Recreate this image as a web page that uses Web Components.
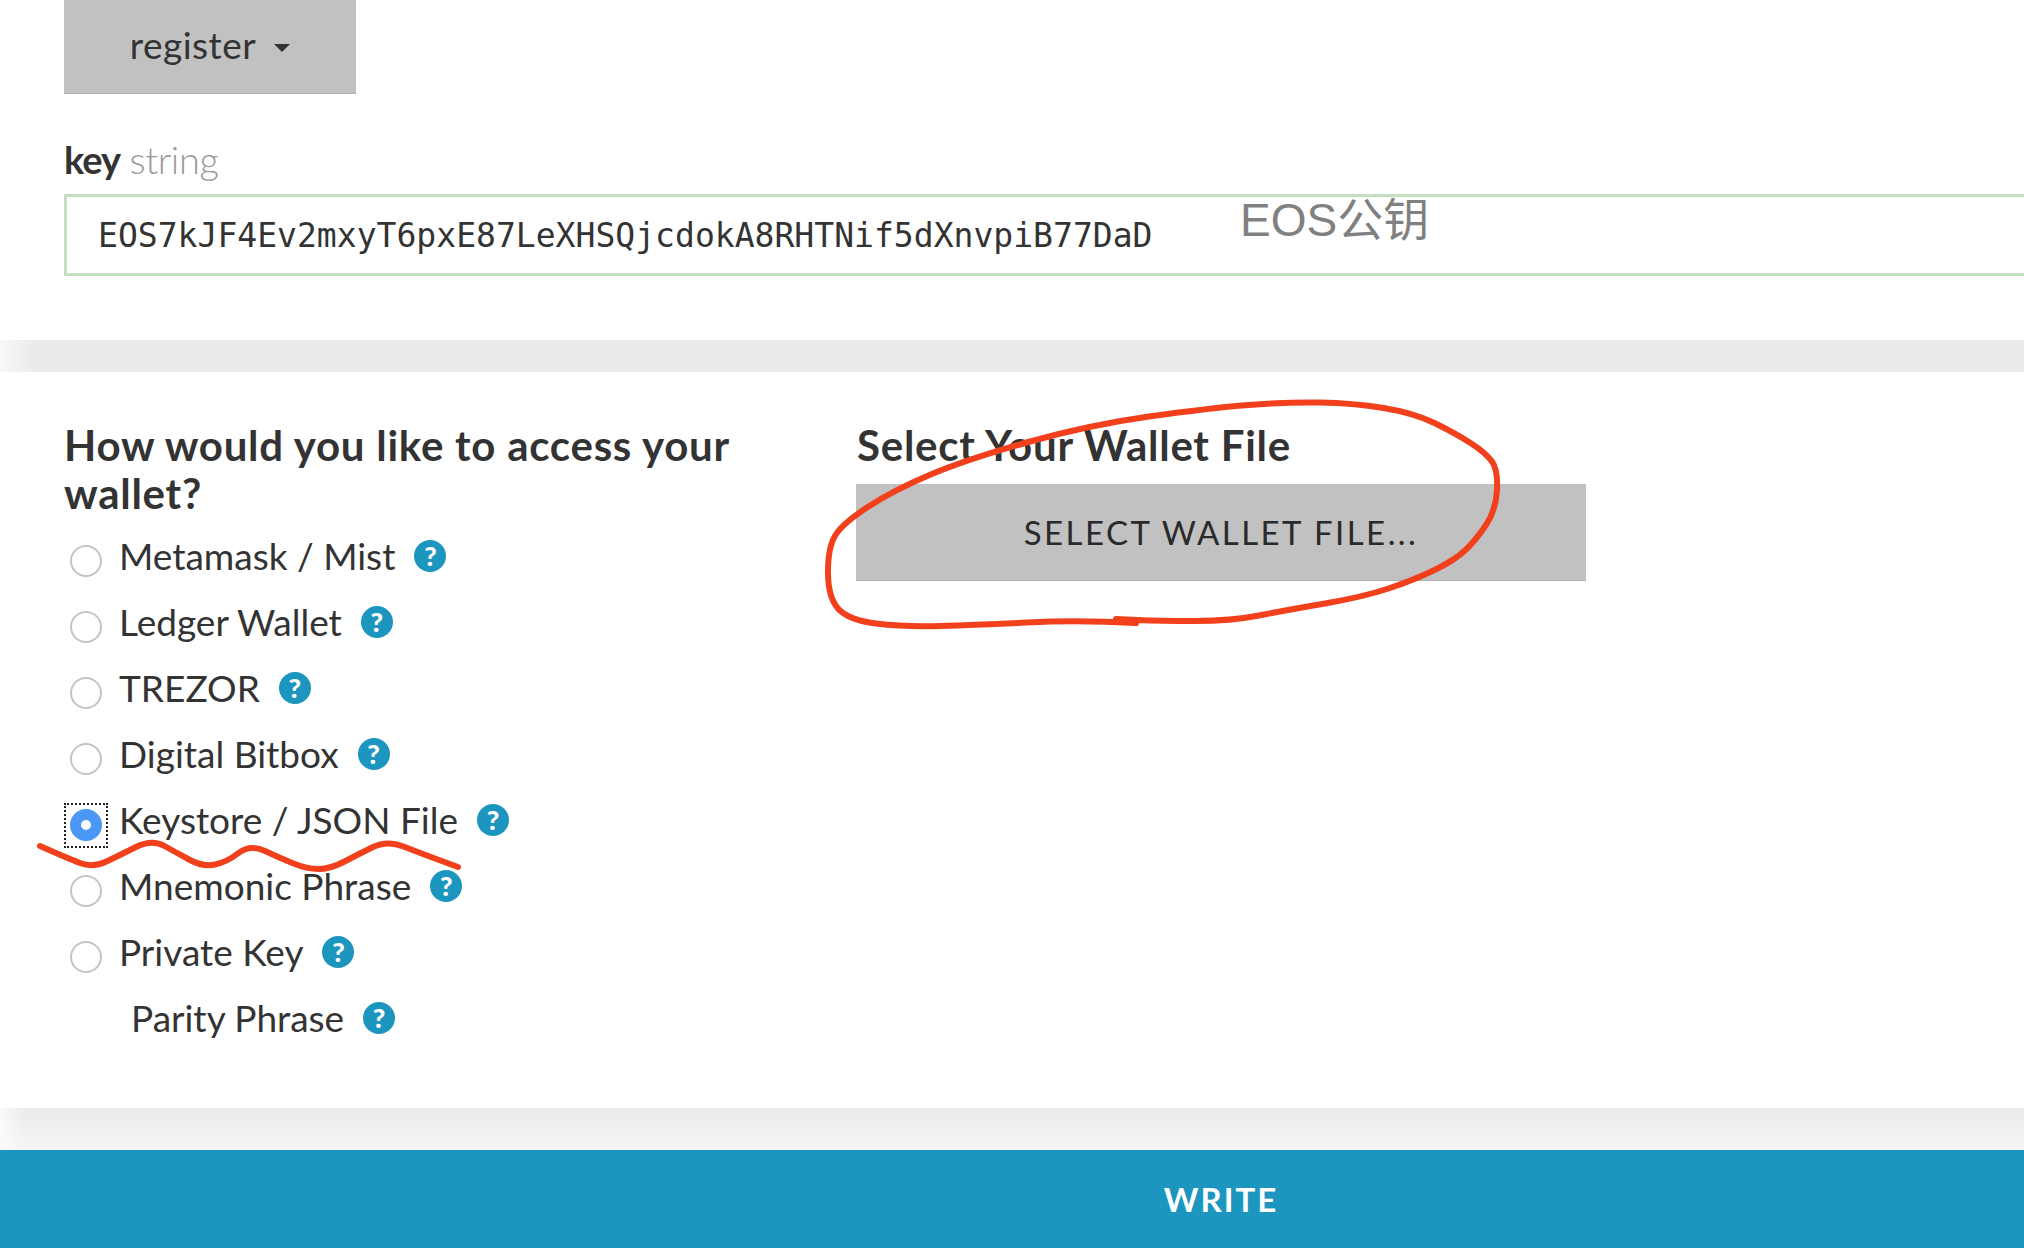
<!DOCTYPE html>
<html lang="en">
<head>
<meta charset="utf-8">
<title>write contract</title>
<style>
    html, body { margin: 0; padding: 0; background: #fff; overflow: hidden; height: 1252px; }
    body { font-family: Lato, "Liberation Sans", sans-serif; color: #333; }
</style>
</head>
<body>
<contract-page>
    <register-form slot="form"></register-form>
    <wallet-panel slot="wallet"></wallet-panel>
</contract-page>

<script>
const pageTemplate = document.createElement('template');
pageTemplate.innerHTML = `
    <style>
        :host { display: block; position: relative; height: 1252px; overflow: hidden; }
        .band { height: 32px; background: linear-gradient(to right, #f8f8f8, #ebebeb 34px); }
        .band.low { height: 42px; background: linear-gradient(to right, #fafafa, transparent 24px), linear-gradient(to bottom, #ebebeb, #f4f5f4); }
        .write { height: 98px; box-sizing: border-box; padding-left: 418px; display: flex; align-items: center; justify-content: center; background: #1c96bf; color: #fff; font-size: 33px; font-weight: 700; letter-spacing: 2px; }
    </style>
    <slot name="form"></slot>
    <div class="band"></div>
    <slot name="wallet"></slot>
    <div class="band low"></div>
    <div class="write">WRITE</div>
    <scribble-mark closed points="1136,623 1078,620 976,625 904,627 848,620 828,597 828,547 843,523 894,490 965,460 1088,425 1210,408 1287,402 1353,403 1414,413 1455,433 1486,453 1498,470 1496,510 1476,540 1455,560 1414,580 1363,597 1287,610 1231,621 1159,621 1116,619"></scribble-mark>
    <scribble-mark points="40,846 67,858 93,868 120,855 152,839 177,853 203,867 227,862 250,844 280,858 307,869 330,869 357,855 387,840 420,853 458,867"></scribble-mark>
`;

class ContractPage extends HTMLElement {
    constructor() {
        super();
        this.attachShadow({ mode: 'open' });
        this.shadowRoot.appendChild(pageTemplate.content.cloneNode(true));
    }
}

const formTemplate = document.createElement('template');
formTemplate.innerHTML = `
    <style>
        :host { display: block; position: relative; height: 340px; padding-left: 64px; box-sizing: border-box; }
        .dropdown { width: 292px; height: 94px; box-sizing: border-box; display: flex; align-items: center; justify-content: center; gap: 18px; padding-bottom: 4px; background: #c1c1c1; border-bottom: 1px solid #b0b0b0; font-size: 37px; letter-spacing: 0.5px; }
        .caret { width: 0; height: 0; margin-top: 6px; border: 8px solid transparent; border-top: 8px solid #333; border-bottom: 0; }
        label { display: block; margin-top: 42px; height: 58px; line-height: 46px; font-size: 38px; letter-spacing: -0.4px; }
        b { font-weight: 700; letter-spacing: -1px; }
        span.type { color: #999; font-weight: 300; }
        .input { height: 82px; box-sizing: border-box; border: 3px solid #c3dfc0; border-right: 0; display: flex; align-items: center; padding: 0 0 0 31px; font-family: "DejaVu Sans Mono", "Liberation Mono", monospace; font-size: 33.05px; color: #333; white-space: nowrap; overflow: hidden; }
        .note { position: absolute; left: 1240px; top: 192px; font-family: "Liberation Sans", "Noto Sans CJK SC", sans-serif; font-size: 46px; line-height: 56px; color: #808080; white-space: nowrap; }
    </style>
    <div class="dropdown">register <span class="caret"></span></div>
    <label><b>key</b> <span class="type">string</span></label>
    <div class="input">EOS7kJF4Ev2mxyT6pxE87LeXHSQjcdokA8RHTNif5dXnvpiB77DaD</div>
    <div class="note">EOS公钥</div>
`;

class RegisterForm extends HTMLElement {
    constructor() {
        super();
        this.attachShadow({ mode: 'open' });
        this.shadowRoot.appendChild(formTemplate.content.cloneNode(true));
    }
}

const panelTemplate = document.createElement('template');
panelTemplate.innerHTML = `
    <style>
        :host { display: grid; grid-template-columns: 793px 729px; height: 736px; box-sizing: border-box; padding: 49px 0 0 64px; }
        h3 { margin: 0; font-size: 42px; line-height: 48px; font-weight: 700; letter-spacing: 0.75px; color: #333; }
        .left h3 { width: 700px; margin-bottom: 6px; }
        .right h3 { margin-bottom: 15px; }
        .file { height: 97px; margin-left: -1px; display: flex; align-items: center; justify-content: center; background: #c1c1c1; border-bottom: 1px solid #b0b0b0; box-sizing: border-box; font-size: 33px; letter-spacing: 2.45px; color: #2a2a2a; }
    </style>
    <div class="left">
        <h3>How would you like to access your wallet?</h3>
        <wallet-option>Metamask / Mist</wallet-option>
        <wallet-option>Ledger Wallet</wallet-option>
        <wallet-option>TREZOR</wallet-option>
        <wallet-option>Digital Bitbox</wallet-option>
        <wallet-option checked>Keystore / JSON File</wallet-option>
        <wallet-option>Mnemonic Phrase</wallet-option>
        <wallet-option>Private Key</wallet-option>
        <wallet-option noradio>Parity Phrase</wallet-option>
    </div>
    <div class="right">
        <h3>Select Your Wallet File</h3>
        <div class="file">SELECT WALLET FILE...</div>
    </div>
`;

class WalletPanel extends HTMLElement {
    constructor() {
        super();
        this.attachShadow({ mode: 'open' });
        this.shadowRoot.appendChild(panelTemplate.content.cloneNode(true));
    }
}

const optionTemplate = document.createElement('template');
optionTemplate.innerHTML = `
    <style>
        :host { display: flex; align-items: center; height: 66px; font-size: 37px; color: #333; white-space: nowrap; }
        .focus { width: 44px; height: 45px; flex: none; box-sizing: border-box; display: flex; align-items: center; justify-content: center; margin-top: 10px; margin-right: 11px; border: 2px dotted transparent; }
        .radio { width: 32px; height: 32px; box-sizing: border-box; border-radius: 50%; border: 2px solid #c4c4c4; background: #fff; }
        :host([checked]) .focus { border-color: #222; }
        :host([checked]) .radio { border: 11px solid #4a97f5; }
        :host([noradio]) .focus { visibility: hidden; margin-right: 23px; }
        .text { margin-top: -2px; }
        .help { width: 32px; height: 32px; margin-left: 19px; margin-top: -1px; border-radius: 50%; flex: none; display: flex; align-items: center; justify-content: center; background: #1c96bf; color: #fff; font-size: 27px; font-weight: 900; line-height: 1; }
    </style>
    <span class="focus"><span class="radio"></span></span>
    <span class="text"><slot></slot></span>
    <span class="help">?</span>
`;

class WalletOption extends HTMLElement {
    constructor() {
        super();
        this.attachShadow({ mode: 'open' });
        this.shadowRoot.appendChild(optionTemplate.content.cloneNode(true));
    }
}

// red pen marks drawn over the screenshot
class ScribbleMark extends HTMLElement {
    constructor() {
        super();
        this.attachShadow({ mode: 'open' });
        const pts = this.getAttribute('points').trim().split(/\s+/).map(p => p.split(',').map(Number));
        let d = 'M' + pts[0];
        for (let i = 1; i < pts.length - 1; i++) {
            const midX = (pts[i][0] + pts[i + 1][0]) / 2;
            const midY = (pts[i][1] + pts[i + 1][1]) / 2;
            d += ' Q' + pts[i] + ' ' + midX + ',' + midY;
        }
        d += ' L' + pts[pts.length - 1];
        this.shadowRoot.innerHTML = `
            <style>
                :host { position: absolute; top: 0; left: 0; display: block; pointer-events: none; }
                svg { display: block; }
            </style>
            <svg width="2024" height="1252" viewBox="0 0 2024 1252" fill="none">
                <path d="${d}" stroke="#f2401d" stroke-width="6" stroke-linecap="round" stroke-linejoin="round"/>
            </svg>
        `;
    }
}

window.customElements.define('scribble-mark', ScribbleMark);
window.customElements.define('wallet-option', WalletOption);
window.customElements.define('wallet-panel', WalletPanel);
window.customElements.define('register-form', RegisterForm);
window.customElements.define('contract-page', ContractPage);
</script>
</body>
</html>
